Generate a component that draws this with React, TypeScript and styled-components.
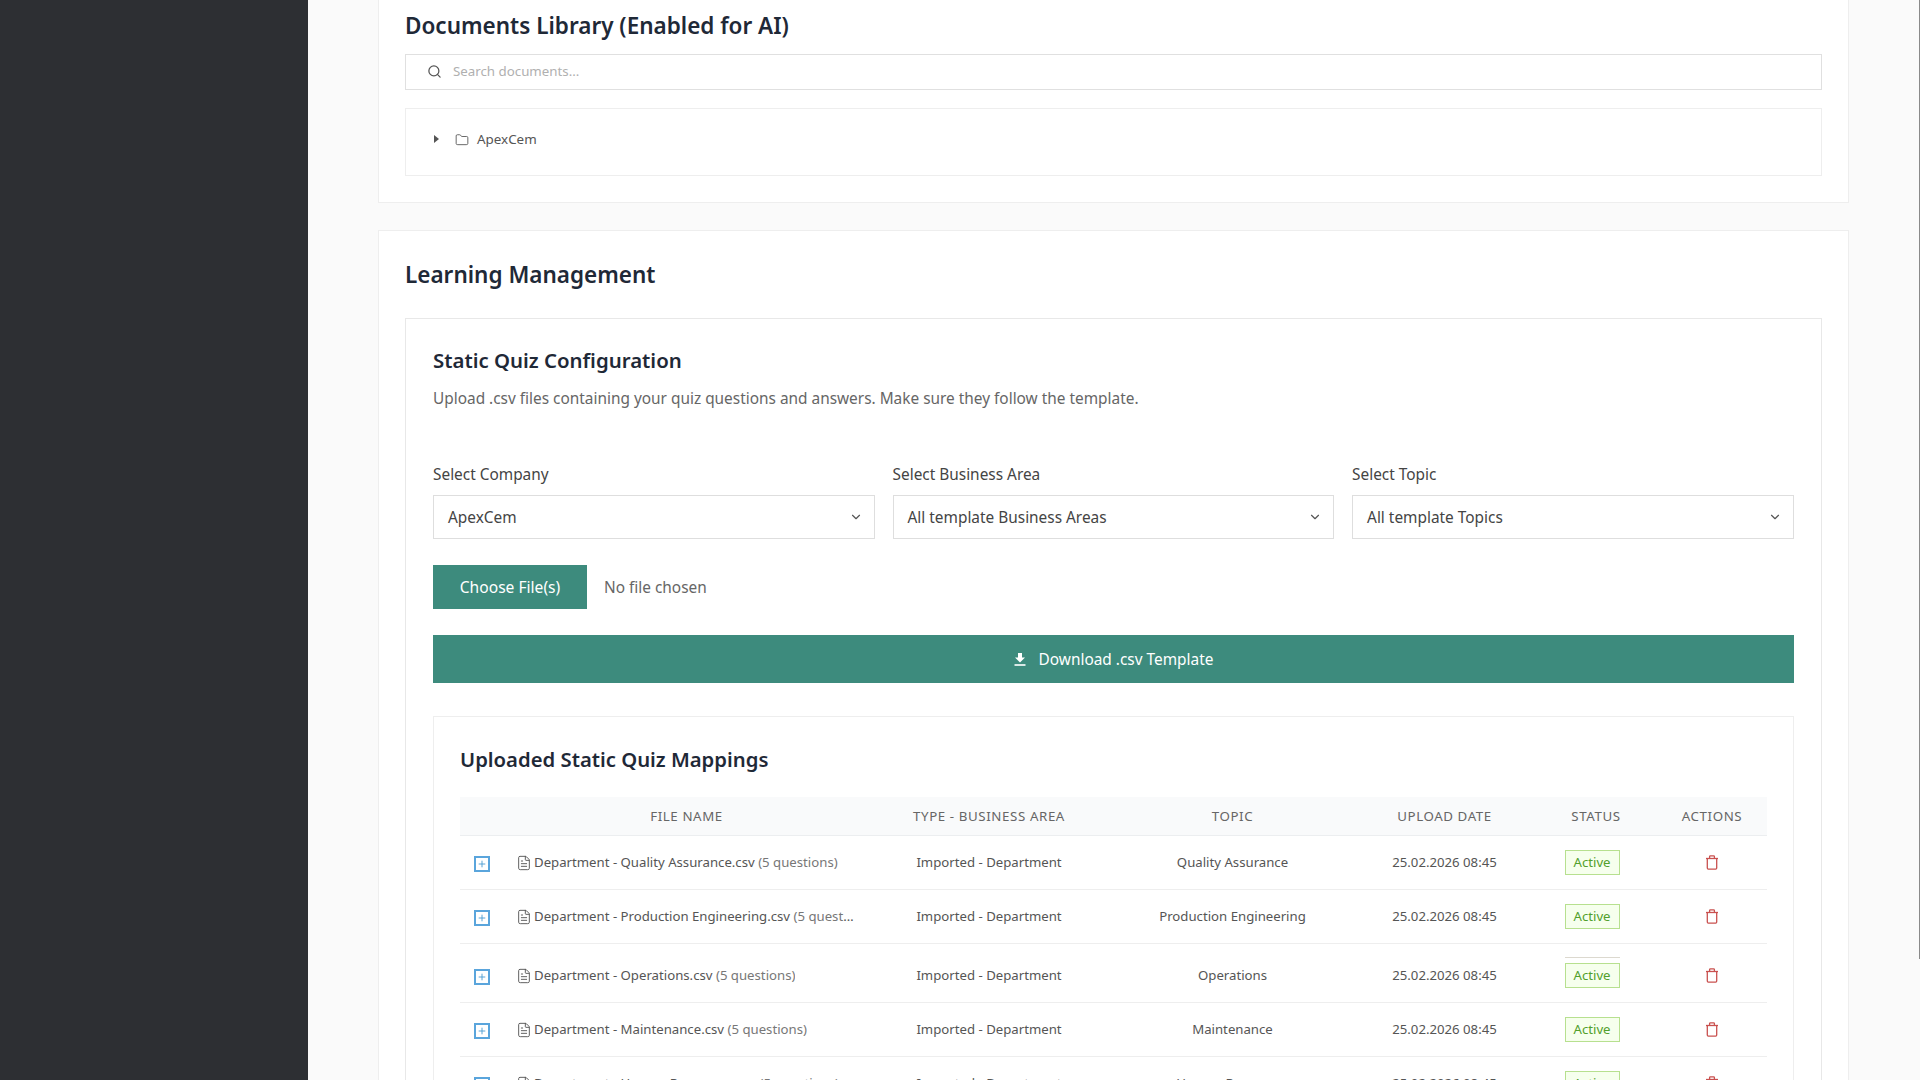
import React from 'react';
import styled, { createGlobalStyle } from 'styled-components';
import { Search, Folder, ChevronDown, FileText, Plus } from 'lucide-react';

const Global = createGlobalStyle`
  html, body { margin: 0; padding: 0; height: 100%; overflow: hidden; }
  body { font-family: "Noto Sans", "Open Sans", sans-serif; background: #fafafa; color: #1f2937; }
  * { box-sizing: border-box; }
`;
const Shell = styled.div`position: relative; display: flex; height: 1080px; overflow: hidden;`;
const Sidebar = styled.aside`width: 308px; flex: none; background: #2d2f33;`;
const Main = styled.main`flex: 1; padding: 0 71px 0 70px; display: flex; flex-direction: column; gap: 27px; overflow: hidden;`;
const ScrollThumb = styled.div`position: absolute; top: 0; right: 0; width: 1px; height: 959px; background: #8a8a8a;`;
const Card = styled.section<{ $cut?: boolean }>`
  flex: none; background: #fff; border: 1px solid #eeeeee; padding: 26px 26px 26px;
  ${p => p.$cut ? 'border-top: none; padding-top: 8px;' : ''}
`;
const H2 = styled.h2`margin: 0; font-size: 22.5px; line-height: 36px; font-weight: 600; color: #1f2937;`;
const SearchBox = styled.div`
  margin-top: 10px; height: 36px; border: 1px solid #e0e0e0; display: flex; align-items: center; gap: 11px;
  padding: 0 0 2px 21px; font-size: 13.3px; color: #b0b0b0;
  svg { color: #555; }
`;
const TreeBox = styled.div`
  margin-top: 18px; height: 68px; border: 1px solid #eeeeee; padding: 20px 28px; display: flex; align-items: flex-start;
  font-size: 13.4px; color: #555;
`;
const TreeRow = styled.div`display: flex; align-items: center; height: 20px; gap: 8px;`;
const Caret = styled.span`width: 0; height: 0; border-left: 5px solid #555; border-top: 4px solid transparent; border-bottom: 4px solid transparent; margin-right: 8px;`;
const FolderIcon = styled(Folder)`margin-top: 2px;`;
const Section = styled.div`margin-top: 25px; border: 1px solid #e8e8e8; padding: 26px 27px 0 27px;`;
const H3 = styled.h3`margin: 0; font-size: 20.4px; line-height: 30px; font-weight: 600; color: #1f2937;`;
const Lead = styled.p`margin: 9px 0 0; font-size: 15.4px; line-height: 30px; color: #666;`;
const Fields = styled.div`margin-top: 50px; display: grid; grid-template-columns: repeat(3, 1fr); gap: 17.6px;`;
const Field = styled.div`display: flex; flex-direction: column; gap: 9px;`;
const Label = styled.label`font-size: 15.4px; line-height: 22px; color: #444;`;
const SelectBox = styled.div`
  height: 44px; border: 1px solid #dedede; display: flex; align-items: center; justify-content: space-between;
  padding: 0 11px 0 14px; font-size: 15.4px; color: #444; background: #fff;
  svg { color: #555; }
`;
const FileRow = styled.div`margin-top: 26px; display: flex; align-items: center; gap: 17px; font-size: 15.4px; color: #666;`;
const ChooseBtn = styled.button`
  width: 154px; height: 44px; border: none; background: #3d8b7d; color: #fff;
  font-family: inherit; font-size: 15.6px;
`;
const DownloadBtn = styled.button`
  margin-top: 26px; width: 100%; height: 48px; border: none; background: #3d8b7d; color: #fff;
  font-family: inherit; font-size: 15.4px; display: flex; align-items: center; justify-content: center; gap: 13px;
`;
const Inner = styled.div`margin-top: 33px; border: 1px solid #eeeeee; padding: 27px 26px 0 26px;`;
const H4 = styled.h4`margin: 0; font-size: 20.3px; line-height: 30px; font-weight: 600; color: #1f2937;`;
const Table = styled.table`margin-top: 23px; width: 100%; border-collapse: collapse; table-layout: fixed;`;
const Th = styled.th`
  height: 38px; padding: 0; background: #f9fafb; border-bottom: 1px solid #eceef0; font-size: 13.3px; font-weight: 400;
  letter-spacing: 0.6px; text-transform: uppercase; color: #666; text-align: center;
`;
const Tr = styled.tr<{ $tall?: boolean }>`
  height: ${p => (p.$tall ? 59 : 54)}px;
  ${p => (p.$tall ? 'td { padding-top: 5px; }' : '')}
`;
const Td = styled.td`padding: 0; border-bottom: 1px solid #eeeeee; font-size: 13.2px; color: #555; text-align: center;`;
const FileCell = styled.div`display: flex; align-items: center; gap: 2px; padding: 0 12px 0 10px; min-width: 0; svg { flex: none; color: #555; margin-top: 1px; }`;
const FileName = styled.span`overflow: hidden; white-space: nowrap; text-overflow: ellipsis; min-width: 0;`;
const Count = styled.span`color: #777;`;
const Expand = styled.span`
  display: inline-flex; align-items: center; justify-content: center; width: 16px; height: 16px;
  border: 2px solid #5aa5dc; color: #4a9bd1; margin: 2px 16px 0 14px; vertical-align: middle;
`;
const Badge = styled.span<{ $ghost?: boolean }>`
  position: relative; display: inline-block; width: 55px; height: 25px; line-height: 23px; border: 1px solid #b7e08f;
  background: #f6ffed; color: #52a02c; font-size: 13.2px; margin-right: 8px; vertical-align: middle;
  ${p => p.$ghost ? `&::before { content: ''; position: absolute; left: -1px; right: -1px; top: -7px; height: 1px; background: #dcd9cf; }` : ''}
`;
const TrashBtn = styled.span`display: inline-flex; color: #c9514f; vertical-align: middle; margin-bottom: 1px;`;

const DownloadGlyph = () => (
  <svg width="12" height="13" viewBox="0 0 12 13" fill="#fff" aria-hidden="true">
    <path d="M4 0h4v4.5h3L6 9.5 1 4.5h3z" />
    <rect x="0.5" y="11.2" width="11" height="1.6" />
  </svg>
);
const TrashGlyph = () => (
  <svg width="14" height="15" viewBox="0 0 14 15" fill="none" stroke="currentColor" strokeWidth="1.3" aria-hidden="true">
    <path d="M1 3.5h12" />
    <path d="M2.3 3.5v9.6a1 1 0 0 0 1 1h7.4a1 1 0 0 0 1-1V3.5" />
    <path d="M4.6 3.5V1.6a.8.8 0 0 1 .8-.8h3.2a.8.8 0 0 1 .8.8v1.9" />
  </svg>
);

const rows = [
  { name: 'Department - Quality Assurance.csv', q: '(5 questions)', topic: 'Quality Assurance' },
  { name: 'Department - Production Engineering.csv', q: '(5 questions)', topic: 'Production Engineering' },
  { name: 'Department - Operations.csv', q: '(5 questions)', topic: 'Operations', tall: true },
  { name: 'Department - Maintenance.csv', q: '(5 questions)', topic: 'Maintenance' },
  { name: 'Department - Human Resources.csv', q: '(5 questions)', topic: 'Human Resources' },
];
const widths = [46, 361, 244, 243, 181, 122, 110];

export default function App() {
  return (
    <Shell>
      <Global />
      <Sidebar />
      <Main>
        <Card $cut>
          <H2>Documents Library (Enabled for AI)</H2>
          <SearchBox><Search size={15} strokeWidth={2} />Search documents...</SearchBox>
          <TreeBox><TreeRow><Caret /><FolderIcon size={14} strokeWidth={1.5} />ApexCem</TreeRow></TreeBox>
        </Card>
        <Card>
          <H2>Learning Management</H2>
          <Section>
            <H3>Static Quiz Configuration</H3>
            <Lead>Upload .csv files containing your quiz questions and answers. Make sure they follow the template.</Lead>
            <Fields>
              <Field><Label>Select Company</Label><SelectBox>ApexCem<ChevronDown size={14} /></SelectBox></Field>
              <Field><Label>Select Business Area</Label><SelectBox>All template Business Areas<ChevronDown size={14} /></SelectBox></Field>
              <Field><Label>Select Topic</Label><SelectBox>All template Topics<ChevronDown size={14} /></SelectBox></Field>
            </Fields>
            <FileRow><ChooseBtn>Choose File(s)</ChooseBtn>No file chosen</FileRow>
            <DownloadBtn><DownloadGlyph />Download .csv Template</DownloadBtn>
            <Inner>
              <H4>Uploaded Static Quiz Mappings</H4>
              <Table>
                <colgroup>{widths.map((w, i) => <col key={i} width={w} />)}</colgroup>
                <thead><tr>
                  <Th></Th><Th>File Name</Th><Th>Type - Business Area</Th><Th>Topic</Th><Th>Upload Date</Th><Th>Status</Th><Th>Actions</Th>
                </tr></thead>
                <tbody>
                  {rows.map(r => (
                    <Tr key={r.name} $tall={r.tall}>
                      <Td><Expand><Plus size={10} strokeWidth={2.2} /></Expand></Td>
                      <Td>
                        <FileCell>
                          <FileText size={16} strokeWidth={1.4} />
                          <FileName>{r.name} <Count>{r.q}</Count></FileName>
                        </FileCell>
                      </Td>
                      <Td>Imported - Department</Td>
                      <Td>{r.topic}</Td>
                      <Td>25.02.2026 08:45</Td>
                      <Td><Badge $ghost={r.tall}>Active</Badge></Td>
                      <Td><TrashBtn><TrashGlyph /></TrashBtn></Td>
                    </Tr>
                  ))}
                </tbody>
              </Table>
            </Inner>
          </Section>
        </Card>
      </Main>
      <ScrollThumb />
    </Shell>
  );
}
